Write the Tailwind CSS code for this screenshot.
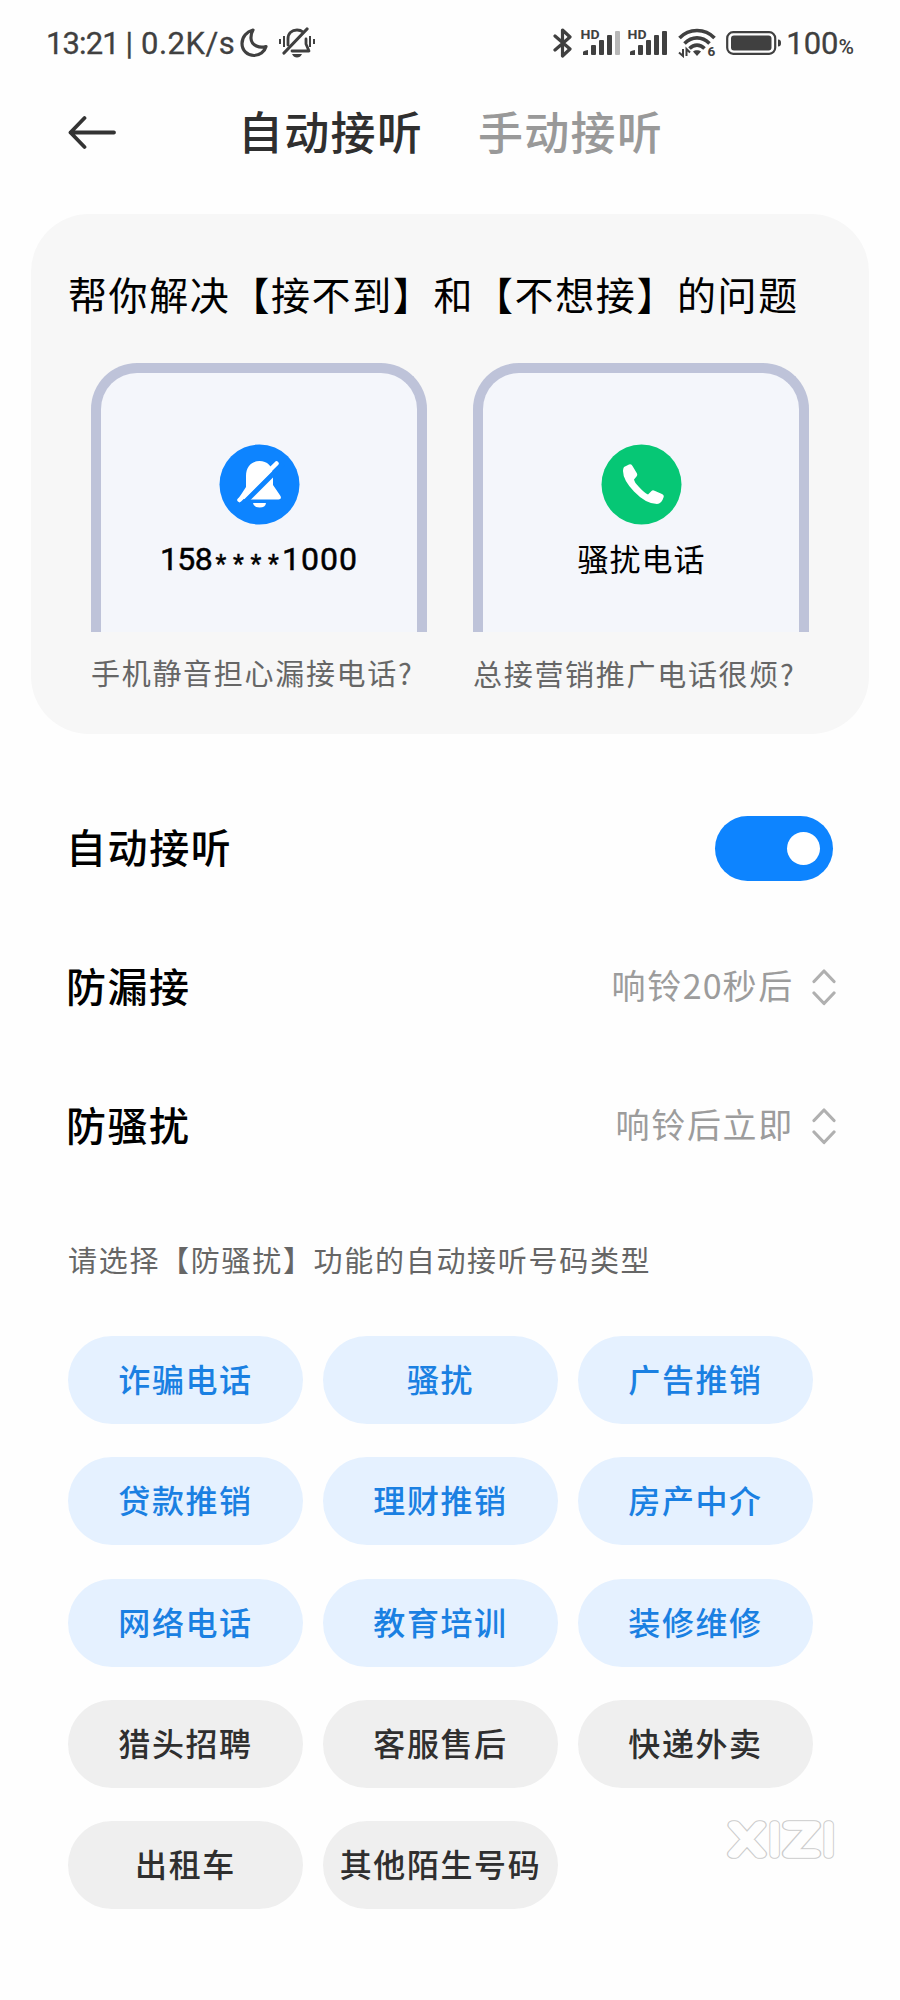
<!DOCTYPE html>
<html lang="zh-CN">

<head>
    <meta charset="UTF-8">
    <meta name="viewport" content="width=device-width, initial-scale=1.0">
    <title>自动接听</title>
    <script src="https://cdn.jsdelivr.net/npm/@tailwindcss/browser@4"></script>
</head>

<body class="bg-[#fefefe] w-[900px] h-[2000px] overflow-hidden relative text-black font-['Noto_Sans_CJK_SC',sans-serif]">

    <!-- Status bar -->
    <div class="h-[86px] flex items-center justify-between pl-[46px] pr-[46px] text-[#404040] font-['Roboto',sans-serif]">
        <div class="flex items-center">
            <span class="w-[194px] text-[31px] leading-none whitespace-nowrap tracking-[-0.9px] [-webkit-text-stroke:0.3px]">13:21 | <span class="tracking-[0.500px] pl-[2px]">0.2K/s</span></span>
            <svg class="w-[28px] h-[30px]" viewBox="0 0 28 30" fill="none" stroke="#404040" stroke-width="3.2" stroke-linejoin="round">
                <path d="M13 2C7 3.500 2 8.500 2 15.500C2 22.500 7.500 27.500 14 27.500C19.500 27.500 24.500 24 26 18.500C20 20.500 11.500 18 11 10.500C10.800 7 11.500 4.500 13 2Z" />
            </svg>
            <svg class="w-[38px] h-[32px] ml-[10px]" viewBox="0 0 38 32" fill="none" stroke="#404040" stroke-linecap="round" stroke-linejoin="round">
                <path stroke-width="2.800" d="M10 18V12C10 6 14 3 19 3C21.500 3 23.500 3.700 25 5M28 12V17L31 24H14" />
                <path stroke-width="3.200" d="M6 26L29 2" />
                <path stroke="none" fill="#404040" d="M14 27H24C23 29.500 21 30.500 19 30.500C17 30.500 15 29.500 14 27Z" />
                <path stroke-width="2" stroke-linecap="butt" d="M2 12V17M6 9V20M32 9V20M36 12V17" />
            </svg>
        </div>
        <div class="flex items-center">
            <svg class="w-[20px] h-[32px]" viewBox="0 0 20 32" fill="none" stroke="#404040" stroke-width="3.200" stroke-linejoin="round" stroke-linecap="round">
                <path d="M2 9L17 22L9.500 29V3L17 10L2 23" />
            </svg>
            <svg class="w-[42px] h-[30px] ml-[7px]" viewBox="0 0 42 30" fill="#404040">
                <text x="0.500" y="11" font-size="12.500" font-weight="700" textLength="19" lengthAdjust="spacingAndGlyphs">HD</text>
                <path d="M3 27V24Q3 23 8 22V27Z" />
                <rect x="11" y="17" width="5" height="10" rx="1" />
                <rect x="19" y="12" width="5" height="15" rx="1" />
                <rect x="27" y="7" width="5" height="20" rx="1" />
                <rect x="35" y="3" width="5" height="24" rx="1" fill="#b8b8b8" />
            </svg>
            <svg class="w-[42px] h-[30px] ml-[5px]" viewBox="0 0 42 30" fill="#404040">
                <text x="0.500" y="11" font-size="12.500" font-weight="700" textLength="19" lengthAdjust="spacingAndGlyphs">HD</text>
                <path d="M3 27V24Q3 23 8 22V27Z" />
                <rect x="11" y="17" width="5" height="10" rx="1" />
                <rect x="19" y="12" width="5" height="15" rx="1" />
                <rect x="27" y="7" width="5" height="20" rx="1" />
                <rect x="35" y="3" width="5" height="24" rx="1" />
            </svg>
            <svg class="w-[38px] h-[30px] ml-[9px]" viewBox="0 0 38 30" fill="none" stroke="#404040">
                <path stroke-width="3.600" d="M1.500 10C11 0 27 0 36.500 10M6.500 15.500C14 8 24 8 31.500 15.500M11.500 20.500C16 16 22 16 26.500 20.500" />
                <path fill="#404040" stroke="none" d="M15 23.500C17 21.800 21 21.800 23 23.500L19 28Z" />
                <path stroke-width="2" d="M5 21V28L1 24.500M8.500 28V21L12 24.500" />
                <text x="29.500" y="28" font-size="13.500" font-weight="700" fill="#404040" stroke="none">6</text>
            </svg>
            <svg class="w-[56px] h-[26px] ml-[10px]" viewBox="0 0 56 26" fill="none">
                <rect x="1.200" y="2.200" width="48" height="21.600" rx="6" stroke="#404040" stroke-width="2.200" />
                <rect x="5" y="5.500" width="40.500" height="15" rx="3" fill="#404040" />
                <path d="M52 9.500C54.500 9.500 55 11 55 13C55 15 54.500 16.500 52 16.500Z" fill="#404040" />
            </svg>
            <span class="ml-[4px] flex items-baseline leading-none"><span class="text-[31px] [-webkit-text-stroke:0.3px]">100</span><span class="text-[21px] font-medium">%</span></span>
        </div>
    </div>

    <!-- Header tabs -->
    <div class="h-[92px] flex items-center">
        <svg class="w-[50px] h-[36px] ml-[68px]" viewBox="0 0 50 36" fill="none" stroke="#333333" stroke-width="3.800" stroke-linecap="round" stroke-linejoin="round">
            <path d="M46 18.500H2.500M16.500 4L2.500 18.500L16.500 33" />
        </svg>
        <h1 class="ml-[120px] mb-[3px] w-[240px] text-[45px] leading-[64px] font-medium tracking-[1.300px] text-[#2f2f2f]">自动接听</h1>
        <span class="mb-[3px] text-[45px] leading-[64px] font-medium tracking-[1.300px] text-[#999999]">手动接听</span>
    </div>

    <!-- Intro card -->
    <div class="mx-[31px] mt-[36px] h-[520px] rounded-[58px] bg-[#f7f7f7]">
        <h2 class="pt-[51px] pl-[37px] h-[149px] text-[39px] leading-[56px] tracking-[1.600px] whitespace-nowrap">帮你解决【接不到】和【不想接】的问题</h2>
        <div class="flex pl-[60px] gap-[46px]">
            <div class="w-[336px]">
                <div class="h-[269px] border-[10px] border-b-0 border-[#bec3d9] rounded-t-[46px] bg-[#f4f6fb] flex flex-col items-center pt-[71px]">
                    <svg class="w-[81px] h-[81px]" viewBox="0 0 81 81">
                        <circle cx="40.500" cy="40.500" r="40" fill="#0d84ff" />
                        <path fill="#fff" d="M27 43V32C27 22 33 17 40.500 17C48 17 54 22 54 32V41L61.500 52Q63 55.500 59.500 55.500H21.500Q19 55.500 20.500 53Z" />
                        <path stroke="#0d84ff" stroke-width="5" d="M20 64L64 20" />
                        <path fill="#0d84ff" d="M10 50L19 53L28 56L22 66H10Z" />
                        <path stroke="#fff" stroke-width="4.500" stroke-linecap="round" d="M20.500 56L57.500 19.500" />
                        <path fill="#fff" d="M34 59H47Q46.500 63.500 40.500 63.500Q34.500 63.500 34 59Z" />
                    </svg>
                    <span class="mt-[13px] h-[42px] flex items-center text-[32px] leading-none font-['Roboto',sans-serif] [-webkit-text-stroke:0.5px]"><span class="tracking-[-0.600px]">158</span><span class="w-[70px] flex justify-around pt-[10px] text-[25px]"><i class="not-italic">*</i><i class="not-italic">*</i><i class="not-italic">*</i><i class="not-italic">*</i></span><span class="tracking-[1px]">1000</span></span>
                </div>
                <p class="mt-[17px] text-[29px] leading-[46px] tracking-[1.700px] whitespace-nowrap text-[#666666]">手机静音担心漏接电话?</p>
            </div>
            <div class="w-[336px]">
                <div class="h-[269px] border-[10px] border-b-0 border-[#bec3d9] rounded-t-[46px] bg-[#f4f6fb] flex flex-col items-center pt-[71px]">
                    <svg class="w-[81px] h-[81px]" viewBox="0 0 81 81">
                        <circle cx="40.500" cy="40.500" r="40" fill="#06c775" />
                        <path fill="#fff" d="M23 23L28 20.500Q30.500 19.500 31.500 22L36 29.500Q36.800 31.200 35.500 32.500L33 35.500Q33.500 38.500 38 43Q43.500 49 47 50.500L50.500 47Q51.800 45.800 53.500 46.800L61 50Q63.500 51.200 62.500 53.500Q60.500 60 56 60Q45 60 33 47.500Q22 36 22 27Q22 24.500 23 23Z" />
                    </svg>
                    <span class="mt-[12px] pl-[1px] text-[31px] leading-[42px] tracking-[1px]">骚扰电话</span>
                </div>
                <p class="mt-[18px] text-[29px] leading-[46px] tracking-[1.700px] whitespace-nowrap text-[#666666]">总接营销推广电话很烦?</p>
            </div>
        </div>
    </div>

    <!-- Settings -->
    <div class="mt-[45px] pl-[66px] pr-[64px]">
        <div class="h-[139px] flex items-center justify-between">
            <span class="pb-[5px] text-[40px] leading-[56px] font-medium tracking-[1.600px]">自动接听</span>
            <div class="w-[118px] h-[65px] mr-[3px] rounded-full bg-[#0d84ff] flex items-center justify-end pr-[13px]">
                <div class="w-[33px] h-[33px] rounded-full bg-white"></div>
            </div>
        </div>
        <div class="h-[139px] flex items-center justify-between pb-[2px]">
            <span class="pb-[4px] text-[40px] leading-[56px] font-medium tracking-[1.500px]">防漏接</span>
            <div class="flex items-center text-[#9c9c9c]">
                <span class="pb-[3px] text-[34px] leading-[50px] tracking-[1.700px]">响铃<span class="tracking-[1px]">20</span>秒后</span>
                <svg class="w-[24px] h-[38px] ml-[18px]" viewBox="0 0 24 38" fill="none" stroke="#b0b0b0" stroke-width="3.200" stroke-linecap="round" stroke-linejoin="round">
                    <path d="M2 13.500L12 3L22 13.500M2 25L12 35.500L22 25" />
                </svg>
            </div>
        </div>
        <div class="h-[139px] flex items-center justify-between pb-[2px]">
            <span class="pb-[4px] text-[40px] leading-[56px] font-medium tracking-[1.500px]">防骚扰</span>
            <div class="flex items-center text-[#9c9c9c]">
                <span class="pb-[3px] text-[34px] leading-[50px] tracking-[1.700px]">响铃后立即</span>
                <svg class="w-[24px] h-[38px] ml-[18px]" viewBox="0 0 24 38" fill="none" stroke="#b0b0b0" stroke-width="3.200" stroke-linecap="round" stroke-linejoin="round">
                    <path d="M2 13.500L12 3L22 13.500M2 25L12 35.500L22 25" />
                </svg>
            </div>
        </div>
    </div>

    <!-- Number types -->
    <p class="mt-[40px] pl-[68px] h-[100px] text-[29px] leading-[46px] tracking-[1.700px] whitespace-nowrap text-[#666666]">请选择【防骚扰】功能的自动接听号码类型</p>
    <div class="ml-[68px] w-[745px] grid grid-cols-3 gap-x-[20px] gap-y-[33.300px] text-[32px] leading-[46px] font-medium tracking-[1.600px] text-center">
        <div class="h-[88px] pb-[4px] rounded-full bg-[#e5f1ff] text-[#1a80e2] flex items-center justify-center">诈骗电话</div>
        <div class="h-[88px] pb-[4px] rounded-full bg-[#e5f1ff] text-[#1a80e2] flex items-center justify-center">骚扰</div>
        <div class="h-[88px] pb-[4px] rounded-full bg-[#e5f1ff] text-[#1a80e2] flex items-center justify-center">广告推销</div>
        <div class="h-[88px] pb-[4px] rounded-full bg-[#e5f1ff] text-[#1a80e2] flex items-center justify-center">贷款推销</div>
        <div class="h-[88px] pb-[4px] rounded-full bg-[#e5f1ff] text-[#1a80e2] flex items-center justify-center">理财推销</div>
        <div class="h-[88px] pb-[4px] rounded-full bg-[#e5f1ff] text-[#1a80e2] flex items-center justify-center">房产中介</div>
        <div class="h-[88px] pb-[4px] rounded-full bg-[#e5f1ff] text-[#1a80e2] flex items-center justify-center">网络电话</div>
        <div class="h-[88px] pb-[4px] rounded-full bg-[#e5f1ff] text-[#1a80e2] flex items-center justify-center">教育培训</div>
        <div class="h-[88px] pb-[4px] rounded-full bg-[#e5f1ff] text-[#1a80e2] flex items-center justify-center">装修维修</div>
        <div class="h-[88px] pb-[4px] rounded-full bg-[#efefef] text-[#2f2f2f] flex items-center justify-center">猎头招聘</div>
        <div class="h-[88px] pb-[4px] rounded-full bg-[#efefef] text-[#2f2f2f] flex items-center justify-center">客服售后</div>
        <div class="h-[88px] pb-[4px] rounded-full bg-[#efefef] text-[#2f2f2f] flex items-center justify-center">快递外卖</div>
        <div class="h-[88px] pb-[4px] rounded-full bg-[#efefef] text-[#2f2f2f] flex items-center justify-center">出租车</div>
        <div class="h-[88px] pb-[4px] rounded-full bg-[#efefef] text-[#2f2f2f] flex items-center justify-center whitespace-nowrap">其他陌生号码</div>
    </div>

    <!-- Watermark -->
    <svg class="absolute left-[715px] top-[1807px] w-[134px] h-[66px] font-['Inter',sans-serif] font-thin" viewBox="-10 -10 134 66" font-size="39" stroke-linejoin="round" stroke-linecap="round">
        <g fill="#cccccc" stroke="#cccccc" stroke-width="9.600">
            <text x="6.500" y="36.500" textLength="31" lengthAdjust="spacingAndGlyphs">X</text>
            <text x="49.500" y="36.500" text-anchor="middle">I</text>
            <text x="59.500" y="36.500" textLength="34" lengthAdjust="spacingAndGlyphs">Z</text>
            <text x="103.500" y="36.500" text-anchor="middle">I</text>
        </g>
        <g fill="#fefefe" stroke="#fefefe" stroke-width="7.600">
            <text x="6.500" y="36.500" textLength="31" lengthAdjust="spacingAndGlyphs">X</text>
            <text x="49.500" y="36.500" text-anchor="middle">I</text>
            <text x="59.500" y="36.500" textLength="34" lengthAdjust="spacingAndGlyphs">Z</text>
            <text x="103.500" y="36.500" text-anchor="middle">I</text>
        </g>
    </svg>
</body>

</html>
